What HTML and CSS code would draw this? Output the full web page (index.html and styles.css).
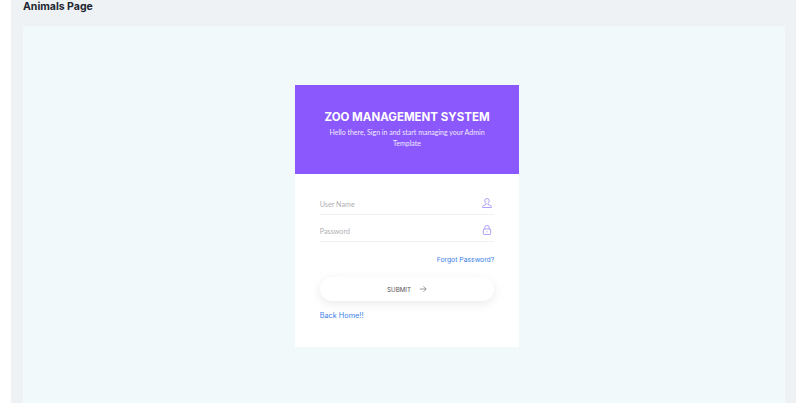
FILE: index.html
```html
<!DOCTYPE html>
<html lang="en">
<head>
    <meta charset="UTF-8">
    <title>Animals Page</title>
    <link rel="stylesheet" href="styles.css">
</head>
<body>
    <div class="content">
        <h1 class="page-title">Animals Page</h1>
        <div class="page-panel">
            <div class="login-card">
                <div class="login-header">
                    <h2>ZOO MANAGEMENT SYSTEM</h2>
                    <p>Hello there, Sign in and start managing your Admin Template</p>
                </div>
                <form class="login-form">
                    <div class="form-row">
                        <span class="placeholder">User Name</span>
                        <svg class="field-icon" viewBox="0 0 12 12" width="12" height="12">
                            <path d="M6 1.500a2.200 2.200 0 0 1 2.200 2.200c0 1.200-.6 2.200-1.200 2.600v1.200l2.600 1c.5.2.8.5.8 1v1H1.600v-1c0-.5.3-.8.8-1l2.600-1V6.300c-.6-.4-1.200-1.400-1.200-2.600A2.200 2.200 0 0 1 6 1.500z"/>
                        </svg>
                    </div>
                    <div class="form-row">
                        <span class="placeholder">Password</span>
                        <svg class="field-icon" viewBox="0 0 12 12" width="12" height="12">
                            <rect x="2.300" y="5" width="7.400" height="5.500" rx="0.800"/>
                            <path d="M3.800 5V3.600a2.200 2.200 0 0 1 4.400 0V5"/>
                            <path d="M6 7.300v1"/>
                        </svg>
                    </div>
                    <div class="forgot-row"><a href="#">Forgot Password?</a></div>
                    <button type="button" class="submit-btn">
                        SUBMIT
                        <svg viewBox="0 0 10 10" width="8" height="8">
                            <path d="M1 5h8M5.500 1.500L9 5 5.500 8.500"/>
                        </svg>
                    </button>
                    <a href="#" class="back-link">Back Home!!</a>
                </form>
            </div>
        </div>
    </div>
</body>
</html>
```

FILE: styles.css
```css
* {
    margin: 0;
    padding: 0;
    box-sizing: border-box;
}

html, body {
    height: 403px;
    overflow: hidden;
}

body {
    background: #fff;
    padding: 0 1px 0 11px;
    font-family: "Open Sans", sans-serif;
}

.content {
    height: 403px;
    background: #eef2f5;
    padding: 0 11px 0 12px;
}

.page-title {
    height: 26px;
    font-family: Inter, sans-serif;
    font-size: 10.500px;
    font-weight: 700;
    line-height: 14px;
    color: #1d2530;
}

.page-panel {
    height: 377px;
    background: #f1f9fb;
    padding: 59px 0 0 6px;
    display: flex;
    justify-content: center;
}

.login-card {
    width: 224.500px;
    height: 262px;
    background: #fff;
}

.login-header {
    height: 89px;
    background: #8a58fd;
    color: #fff;
    text-align: center;
    padding: 25px 25px 0;
}

.login-header h2 {
    font-family: Inter, sans-serif;
    font-size: 11.500px;
    font-weight: 700;
    line-height: 15px;
    white-space: nowrap;
}

.login-header p {
    margin-top: 2px;
    font-family: Lato, sans-serif;
    font-size: 7px;
    line-height: 11px;
    color: #f1eaff;
}

.login-form {
    padding: 14px 25px 0;
}

.form-row {
    height: 27px;
    display: flex;
    align-items: center;
    justify-content: space-between;
    padding: 6px 1px 0 0;
    border-bottom: 1px solid #f0f0f3;
}

.placeholder {
    font-family: Lato, sans-serif;
    font-size: 7.200px;
    color: #b0b0b4;
}

.field-icon {
    margin-top: -3px;
    fill: none;
    stroke: #9d86f5;
    stroke-width: 0.800;
}

.forgot-row {
    margin-top: 13px;
    text-align: right;
    font-size: 6.800px;
    line-height: 10px;
}

.forgot-row a,
.back-link {
    font-family: Inter, sans-serif;
    color: #3d7fe6;
    text-decoration: none;
}

.submit-btn {
    display: flex;
    align-items: center;
    justify-content: center;
    gap: 8px;
    width: 100%;
    height: 24px;
    margin-top: 12px;
    background: #fff;
    border: none;
    border-radius: 12px;
    box-shadow: 0 3px 10px rgba(60, 60, 90, 0.1);
    font-family: Inter, sans-serif;
    font-size: 6.200px;
    color: #555;
}

.submit-btn svg {
    fill: none;
    stroke: #666;
    stroke-width: 0.800;
}

.back-link {
    display: block;
    margin-top: 10px;
    font-size: 7.300px;
    line-height: 10px;
}
```
